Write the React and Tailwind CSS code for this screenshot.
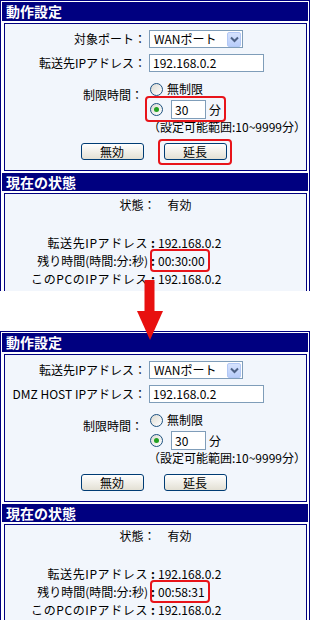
import React from "react";

// shared font for every piece of text (MS PGothic look-alike)
const JP = "font-['Noto_Sans_CJK_JP','Noto_Sans',sans-serif]";

// red annotation frame drawn over an element
function RedBox({ className }) {
  return (
    <div
      className={`pointer-events-none absolute rounded-[4px] border-2 border-[#e8141a] ${className}`}
    />
  );
}

function Radio({ checked }) {
  return (
    <span className="flex h-[13px] w-[13px] shrink-0 items-center justify-center rounded-full border border-[#1c5180] bg-gradient-to-br from-[#dcdad2] to-white">
      {checked && <span className="h-[5px] w-[5px] rounded-full bg-[#21a121]" />}
    </span>
  );
}

function XpButton({ children }) {
  return (
    <div className="flex h-[17px] w-[63px] items-center justify-center rounded-[3px] border border-[#003c74] bg-gradient-to-b from-white to-[#e3e0d4] text-[12px] leading-none text-black">
      {children}
    </div>
  );
}

function Select() {
  return (
    <div className="flex h-[18px] w-[94px] items-center border border-[#7f9db9] bg-white pl-[4px] pr-px">
      <span className="flex-1 text-[12px] leading-none">WANポート</span>
      <span className="flex h-[15px] w-[14px] items-center justify-center rounded-[2px] border border-[#b3c8f5] bg-gradient-to-b from-[#d6e2fd] to-[#b8cdfa]">
        <svg width="9" height="7" viewBox="0 0 9 7">
          <path d="M1 1.5 L4.5 5 L8 1.5" fill="none" stroke="#4d6185" strokeWidth="2" />
        </svg>
      </span>
    </div>
  );
}

function TextBox({ value, className }) {
  return (
    <div className={`flex items-center border border-[#7f9db9] bg-white pl-[3px] text-[12px] leading-none ${className}`}>
      {value}
    </div>
  );
}

function StatusRow({ label, value, boxed, wide }) {
  return (
    <div className="flex h-[18px] items-center text-[12px]">
      <span className={`w-[143px] whitespace-nowrap text-right ${wide ? "tracking-[0.6px]" : ""}`}>{label}</span>
      <span className="w-[10px] text-center font-bold">:</span>
      <span className="relative">
        {value}
        {boxed && <RedBox className="-left-[8px] -right-[5px] -top-[3px] -bottom-[2px]" />}
      </span>
    </div>
  );
}

function Screen({ annotated, firstLabel, secondLabel, timeLeft }) {
  return (
    <div className="border border-[#000080] bg-white p-px">
      <div className="h-[19px] bg-[#000080] pl-[4px] text-[14px] font-bold leading-[19px] text-white">
        動作設定
      </div>

      {/* settings panel */}
      <div className="ml-[2px] mr-px mt-[2px] border border-[#000080] bg-[#f2f6fc] pb-[10px] pt-[6px] text-[12px] text-black">
        <div className="flex items-center">
          <span className="w-[141px] whitespace-nowrap text-right">{firstLabel}</span>
          <span className="ml-[3px]">
            <Select />
          </span>
        </div>
        <div className="mt-[6px] flex items-center">
          <span className="w-[141px] whitespace-nowrap text-right">{secondLabel}</span>
          <TextBox value="192.168.0.2" className="ml-[3px] h-[18px] w-[115px]" />
        </div>

        <div className="mt-[10px] flex">
          <span className="w-[141px] pt-[6px] text-right leading-[14px]">制限時間：</span>
          <div className="ml-[3px] flex flex-col">
            <div className="flex h-[14px] items-center pl-[4px]">
              <Radio />
              <span className="ml-[4px] leading-none">無制限</span>
            </div>
            <div className="relative mt-[4px] flex items-center self-start pl-[4px] pr-[4px]">
              <Radio checked />
              <TextBox value="30" className="ml-[8px] h-[19px] w-[35px]" />
              <span className="ml-[3px] leading-none">分</span>
              {annotated && <RedBox className="-left-px -right-px -top-[4px] -bottom-[3px]" />}
            </div>
            <div className="mt-px whitespace-nowrap pl-[2px] leading-[14px]">（設定可能範囲:10~9999分）</div>
          </div>
        </div>

        <div className="mt-[9px] flex justify-center gap-5 pr-[4px]">
          <XpButton>無効</XpButton>
          <div className="relative">
            <XpButton>延長</XpButton>
            {annotated && <RedBox className="-left-[6px] -right-[5px] -top-[4px] -bottom-[5px]" />}
          </div>
        </div>
      </div>

      <div className="mt-[2px] h-[18px] bg-[#000080] pl-[4px] text-[14px] font-bold leading-[18px] text-white">
        現在の状態
      </div>

      {/* status panel */}
      <div className="ml-[2px] mr-px mt-[2px] h-[200px] border border-[#000080] bg-[#f2f6fc] pt-[2px] text-black">
        <div className="h-[18px] text-center text-[12px] leading-[18px]">状態：　有効</div>
        <div className="mt-[20px]">
          <StatusRow label="転送先IPアドレス" value="192.168.0.2" wide />
          <StatusRow label="残り時間(時間:分:秒)" value={timeLeft} boxed />
          <StatusRow label="このPCのIPアドレス" value="192.168.0.2" wide />
        </div>
      </div>
    </div>
  );
}

export default function App() {
  return (
    <div className={`relative h-[620px] w-[310px] overflow-hidden bg-white ${JP}`}>
      <div className="h-[291px] overflow-hidden">
        <Screen annotated firstLabel="対象ポート：" secondLabel="転送先IPアドレス：" timeLeft="00:30:00" />
      </div>
      <div className="h-[40px]" />
      <div className="h-[289px] overflow-hidden">
        <Screen firstLabel="転送先IPアドレス：" secondLabel="DMZ HOST IPアドレス：" timeLeft="00:58:31" />
      </div>

      {/* red arrow between the two captures */}
      <svg className="absolute left-[137px] top-[280px] z-10" width="26" height="61" viewBox="0 0 26 61">
        <rect x="7.5" y="0" width="10" height="32" fill="#e8100f" />
        <polygon points="0,31 26,31 13,60" fill="#e8100f" />
      </svg>
    </div>
  );
}
